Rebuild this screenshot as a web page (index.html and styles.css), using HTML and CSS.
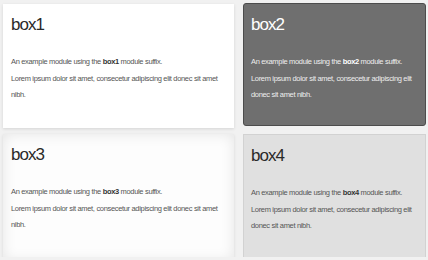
FILE: index.html
```html
<!DOCTYPE html>
<html lang="en">

<head>
    <meta charset="UTF-8">
    <meta name="viewport" content="width=device-width, initial-scale=1.0">
    <title>Module suffixes</title>
    <link rel="stylesheet" href="styles.css">
</head>

<body>
    <div class="modules">
        <div class="module box1">
            <h3 class="module-title">box1</h3>
            <p>An example module using the <strong>box1</strong> module suffix.</p>
            <p>Lorem ipsum dolor sit amet, consecetur adipiscing elit donec sit amet nibh.</p>
        </div>
        <div class="module box2">
            <h3 class="module-title">box2</h3>
            <p>An example module using the <strong>box2</strong> module suffix.</p>
            <p>Lorem ipsum dolor sit amet, consecetur adipiscing elit donec sit amet nibh.</p>
        </div>
        <div class="module box3">
            <h3 class="module-title">box3</h3>
            <p>An example module using the <strong>box3</strong> module suffix.</p>
            <p>Lorem ipsum dolor sit amet, consecetur adipiscing elit donec sit amet nibh.</p>
        </div>
        <div class="module box4">
            <h3 class="module-title">box4</h3>
            <p>An example module using the <strong>box4</strong> module suffix.</p>
            <p>Lorem ipsum dolor sit amet, consecetur adipiscing elit donec sit amet nibh.</p>
        </div>
    </div>
</body>

</html>
```

FILE: styles.css
```css
body {
    margin: 0;
    background-color: #f1f1f1;
    font-family: "Liberation Sans", Arial, sans-serif;
}

.modules {
    display: grid;
    grid-template-columns: 231px 183px;
    grid-template-rows: 124px 124px;
    column-gap: 9px;
    row-gap: 5px;
    padding: 4px 2px 0 3px;
}

.module {
    box-sizing: border-box;
    padding: 10px 8px 8px;
    color: #555;
}

.module-title {
    margin: 0 0 18px;
    font-weight: normal;
    font-size: 17px;
    line-height: 22px;
    letter-spacing: -1px;
    color: #2a2a2a;
}

.module p {
    margin: 0;
    font-size: 7.5px;
    line-height: 16.5px;
    letter-spacing: -0.33px;
}

.module strong {
    color: #333;
}

.box1 {
    background-color: #fff;
    box-shadow: 0 1px 3px rgba(0, 0, 0, 0.12);
}

.box2 {
    margin-top: -1px;
    margin-bottom: 2px;
    padding-left: 7px;
    background-color: #6f6f6f;
    border: 1px solid #4c4c4c;
    border-radius: 3px;
    color: #eee;
}

.box2 .module-title,
.box2 strong {
    color: #fff;
}

.box3 {
    margin-top: 1px;
    margin-bottom: -4px;
    background-color: #fdfdfd;
    box-shadow: inset 0 0 14px rgba(0, 0, 0, 0.1), 0 1px 3px rgba(0, 0, 0, 0.1);
}

.box4 {
    margin-top: 1px;
    margin-bottom: -2px;
    padding-left: 7px;
    background-color: #e0e0e0;
    border: 1px solid #d2d2d2;
}
```
